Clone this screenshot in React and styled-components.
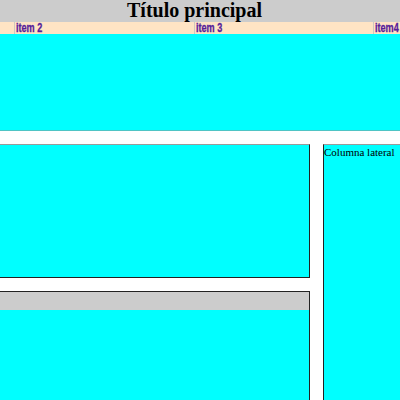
import React from "react";
import styled, { createGlobalStyle } from "styled-components";

const Global = createGlobalStyle`
  html, body { margin: 0; padding: 0; background: #fff; overflow: hidden; }
  body { font-family: "Liberation Serif", "Times New Roman", serif; }
`;

const Page = styled.div`
  width: 400px;
  height: 400px;
  overflow: hidden;
  display: flex;
  flex-direction: column;
`;

const Header = styled.h1`
  margin: 0;
  height: 22px;
  background: #cccccc;
  color: #000;
  font-family: "Liberation Serif", "Times New Roman", serif;
  font-weight: bold;
  font-size: 20px;
  line-height: 20px;
  text-align: center;
  padding-right: 11px;
  flex: none;
`;

const Nav = styled.nav`
  height: 12px;
  background: #ffe4c4;
  display: flex;
  padding-left: 14px;
  overflow: hidden;
  flex: none;
`;

const NavItem = styled.a`
  flex: 0 0 179.5px;
  box-sizing: border-box;
  height: 12px;
  border-left: 1px solid #cfc7c0;
  padding-left: 1px;
  text-decoration: none;
  white-space: nowrap;
  display: block;
`;

const NavLabel = styled.span`
  display: block;
  font-family: "Liberation Sans", Arial, sans-serif;
  font-weight: bold;
  font-size: 13px;
  line-height: 12px;
  height: 12px;
  color: #56209a;
  transform: scaleX(0.7);
  transform-origin: left center;
  -webkit-text-stroke: 0.3px #56209a;
`;

const Banner = styled.div`
  height: 96px;
  background: #00ffff;
  border-bottom: 1px solid #4fc4c4;
  flex: none;
`;

const Main = styled.div`
  margin-top: 13px;
  display: grid;
  grid-template-columns: 310px 1fr;
  column-gap: 13px;
  flex: 1;
  min-height: 0;
`;

const LeftCol = styled.div`
  display: flex;
  flex-direction: column;
  gap: 13px;
`;

const Box = styled.div`
  background: #00ffff;
  border-top: 1px solid ${(p) => (p.$lightTop ? "#9a9a9a" : "#222")};
  border-right: 1px solid #222;
  border-bottom: ${(p) => (p.$bottom ? "1px solid #222" : "none")};
  height: ${(p) => p.$h || "auto"};
  flex: ${(p) => (p.$grow ? "1 0 auto" : "none")};
  display: flex;
  flex-direction: column;
  box-sizing: border-box;
`;

const BoxHead = styled.div`
  height: 18px;
  background: #cccccc;
  flex: none;
`;

const Sidebar = styled.aside`
  background: #00ffff;
  border-top: 1px solid #9a9a9a;
  border-left: 1px solid #222;
  font-family: "Liberation Serif", "Times New Roman", serif;
  font-size: 11px;
  line-height: 13px;
  color: #000;
  padding-top: 1px;
`;

export default function App() {
  return (
    <>
      <Global />
      <Page>
        <Header>Título principal</Header>
        <Nav>
          <NavItem href="#"><NavLabel>item 2</NavLabel></NavItem>
          <NavItem href="#"><NavLabel>item 3</NavLabel></NavItem>
          <NavItem href="#"><NavLabel>item4</NavLabel></NavItem>
        </Nav>
        <Banner />
        <Main>
          <LeftCol>
            <Box $lightTop $bottom $h="134px" />
            <Box $grow>
              <BoxHead />
            </Box>
          </LeftCol>
          <Sidebar>Columna lateral</Sidebar>
        </Main>
      </Page>
    </>
  );
}
